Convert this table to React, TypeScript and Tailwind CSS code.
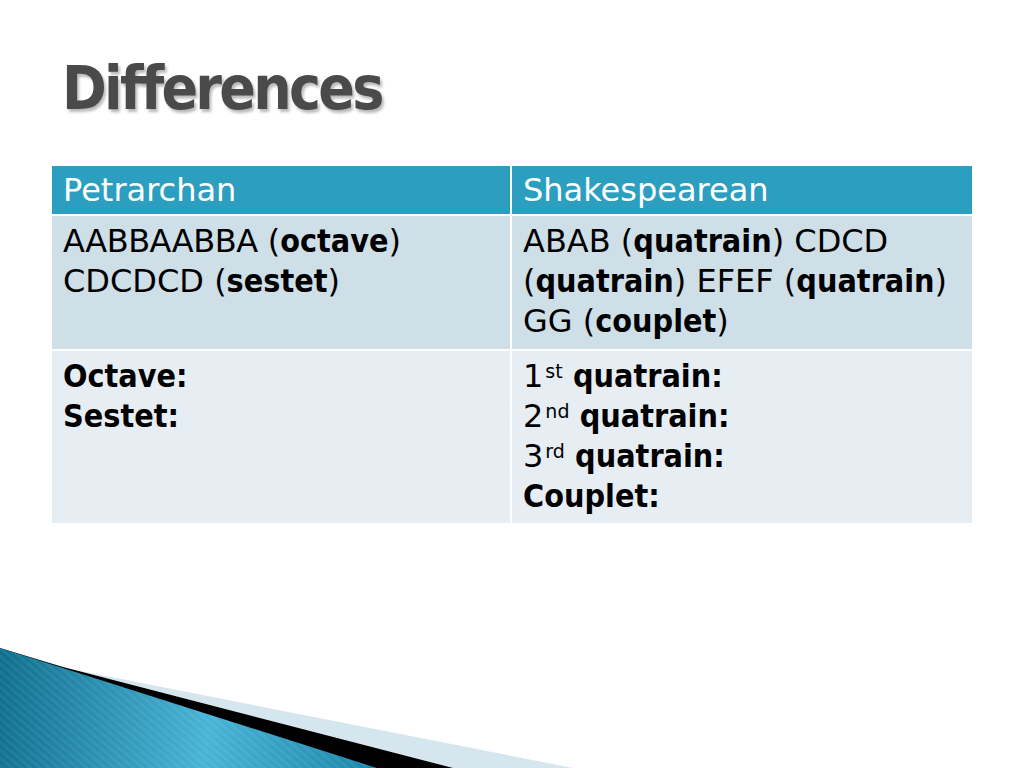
export default function App() {
  const body = { fontFamily: '"DejaVu Sans", Verdana, sans-serif' };
  const cond = "font-bold [font-family:'DejaVu_Sans_Condensed','DejaVu_Sans',sans-serif] [font-stretch:condensed]";

  return (
    <div className="relative w-[1024px] h-[768px] overflow-hidden bg-white" style={body}>
      <h1
        className={`pl-[62px] pt-[50px] text-[60px] leading-[76px] text-[#4a4a4a] tracking-[-2.7px] [text-shadow:2px_3px_3px_rgba(0,0,0,0.28)] ${cond}`}
      >
        Differences
      </h1>

      <div className="mx-[52px] mt-[40px] grid grid-cols-[458px_460px] grid-rows-[48px_133px_172px] gap-[2px] bg-white text-[32px] leading-[40px] text-black">
        <div className="bg-[#2c9fc0] px-[11px] pt-[4px] text-white">Petrarchan</div>
        <div className="bg-[#2c9fc0] px-[11px] pt-[4px] text-white">Shakespearean</div>

        <div className="bg-[#cedfe8] px-[11px] pt-[5px]">
          <span className="tracking-[-0.5px]">AABBAABBA</span> (<b className={cond}>octave</b>)<br />
          CDCDCD (<b className={cond}>sestet</b>)
        </div>
        <div className="bg-[#cedfe8] px-[11px] pt-[5px]">
          ABAB (<b className={cond}>quatrain</b>) CDCD<br />
          (<b className={cond}>quatrain</b>) EFEF (<b className={cond}>quatrain</b>)<br />
          GG (<b className={cond}>couplet</b>)
        </div>

        <div className={`bg-[#e6edf3] px-[11px] pt-[5px] ${cond}`}>
          Octave:
          <br />
          Sestet:
        </div>
        <div className="bg-[#e6edf3] px-[11px] pt-[5px]">
          1<sup className="text-[19px] ml-[2px]">st</sup> <b className={cond}>quatrain:</b>
          <br />
          2<sup className="text-[19px] ml-[2px]">nd</sup> <b className={cond}>quatrain:</b>
          <br />
          3<sup className="text-[19px] ml-[2px]">rd</sup> <b className={cond}>quatrain:</b>
          <br />
          <b className={cond}>Couplet:</b>
        </div>
      </div>

      {/* bottom-left swoosh */}
      <svg className="absolute left-0 bottom-0" width="600" height="130" viewBox="0 638 600 130">
        <defs>
          <linearGradient id="swoosh" x1="0" y1="700" x2="380" y2="740" gradientUnits="userSpaceOnUse">
            <stop offset="0" stopColor="#10708f" />
            <stop offset="0.55" stopColor="#48b3d6" />
            <stop offset="1" stopColor="#1a85a8" />
          </linearGradient>
          <pattern id="stripes" width="6" height="6" patternUnits="userSpaceOnUse" patternTransform="rotate(-50)">
            <rect width="3" height="6" fill="rgba(255,255,255,0.06)" />
          </pattern>
        </defs>
        <polygon points="60,667 573,768 0,768" fill="#d6e6ef" />
        <polygon points="0,648 63,667 453,768 0,768" fill="#000" />
        <polygon points="0,648 377,768 0,768" fill="url(#swoosh)" />
        <polygon points="0,648 377,768 0,768" fill="url(#stripes)" />
      </svg>
    </div>
  );
}
